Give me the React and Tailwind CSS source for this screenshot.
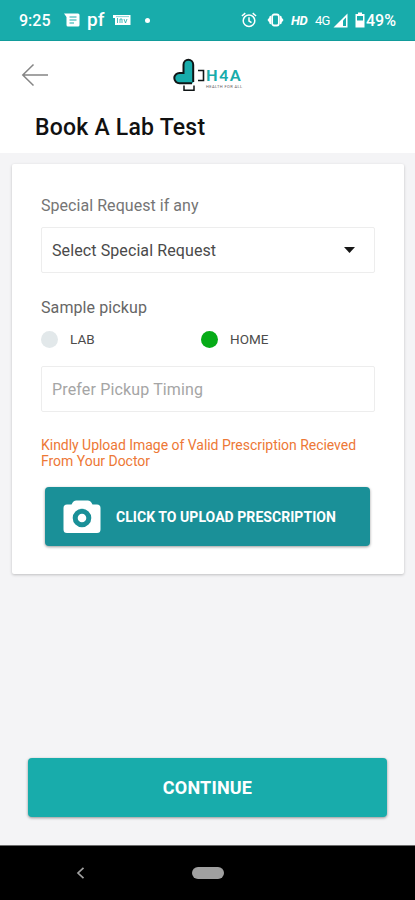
import { useState } from "react";

function StatusBar() {
  return (
    <div className="h-[41px] bg-[#18acab] border-b border-[#129c9b] flex items-center text-white pl-[19px] pr-[18px]">
      <span className="w-8 pt-[2px] text-[16px] font-medium leading-none whitespace-nowrap">9:25</span>

      <svg className="ml-[13px] w-[16px] h-[14px]" viewBox="0 0 16 14" fill="none">
        <path d="M0 0.500H14A1.500 1.500 0 0 1 15.500 2V12A1.500 1.500 0 0 1 14 13.500H4A1.500 1.500 0 0 1 2.500 12V4Z" fill="white" />
        <path d="M5.500 4H12.500M5.500 7H12.500M5.500 10H10" stroke="#18acab" strokeWidth="1.200" />
      </svg>
      <span className="ml-[7px] w-[17px] text-[19px] font-medium leading-none -mt-[2px] whitespace-nowrap">pf</span>
      <svg className="ml-[9px] w-[18px] h-[12px]" viewBox="0 0 18 12" fill="none">
        <path d="M0 1H17.500V11H2V4H0Z" fill="white" />
        <path d="M4.500 4V9M7 9V5H9V9M11 5L12.500 9L14 5" stroke="#18acab" strokeWidth="0.800" />
        <path d="M3 2.600H16" stroke="#18acab" strokeWidth="0.500" />
      </svg>
      <span className="ml-[14px] w-[5px] h-[5px] rounded-full bg-white" />

      <svg className="ml-auto w-[16px] h-[16px]" viewBox="0 0 16 16" fill="none" stroke="white" strokeWidth="1.500">
        <circle cx="8" cy="8.700" r="5.800" />
        <path d="M8 5.200V9L10.500 10.600M0.900 4L4.300 1.200M15.100 4L11.700 1.200" />
      </svg>
      <svg className="ml-[10px] w-[17px] h-[14px]" viewBox="0 0 18 14" preserveAspectRatio="none" fill="none">
        <rect x="5.500" y="1.500" width="7" height="11" rx="2" stroke="white" strokeWidth="1.800" />
        <path d="M4.500 2.500V11.500L2.500 10.500V9.500L0.500 7L2.500 4.500V3.500ZM13.500 2.500V11.500L15.500 10.500V9.500L17.500 7L15.500 4.500V3.500Z" fill="white" />
      </svg>
      <span className="ml-[7px] w-[17px] pt-px text-[13px] font-bold italic leading-none tracking-[-0.3px] whitespace-nowrap">HD</span>
      <span className="ml-[7px] w-[15px] pt-px text-[13px] leading-none tracking-[-0.8px] whitespace-nowrap">4G</span>
      <svg className="ml-[3px] w-[15px] h-[15px]" viewBox="0 0 15 15" fill="none">
        <path d="M14.500 0.500V14.500H0.500Z" fill="white" />
        <path d="M13 4.500V13H10V7.500Z" fill="#18acab" />
      </svg>
      <svg className="ml-[7px] w-[10px] h-[16px]" viewBox="0 0 10 16" fill="none">
        <path d="M3 0.500H7V2H9.500V15.500H0.500V2H3Z" fill="white" />
        <path d="M2 4H8V8.500H2Z" fill="#18acab" />
      </svg>
      <span className="ml-px w-[31px] pt-[2px] text-[16px] font-medium leading-none whitespace-nowrap">49%</span>
    </div>
  );
}

function Logo() {
  return (
    <div className="flex items-start">
      <svg className="w-[33px] h-[34px]" viewBox="0 0 33 34" fill="none">
        <path
          d="M20.200 25.300H6.500A5.200 5.200 0 0 1 6.500 14.900H10.500V6.700A4.850 4.850 0 0 1 20.200 6.700Z"
          fill="#18acab"
        />
        <path
          d="M19 25.300H6.500A5.200 5.200 0 0 1 6.500 14.900H10.500V6.700A4.850 4.850 0 0 1 20.200 6.700V24"
          stroke="#101516"
          strokeWidth="2"
        />
        <path d="M25 12.500H30.500V22.500H25" stroke="#101516" strokeWidth="1.600" />
        <path d="M11 27.500V32.200H21V27.500" stroke="#101516" strokeWidth="1.500" />
      </svg>
      <div className="mt-[8px] w-[38px]">
        <p className="font-[Lato,sans-serif] text-[15px] leading-[18px] font-black tracking-[1.8px] text-[#18acab] whitespace-nowrap">H4A</p>
        <p className="text-[4px] leading-[5px] tracking-[0.4px] text-[#665c5c] whitespace-nowrap">HEALTH FOR ALL</p>
      </div>
    </div>
  );
}

function PickupOption({ label, selected, onSelect }) {
  return (
    <button type="button" onClick={onSelect} className="w-[160px] h-[18px] flex items-center gap-[12px]">
      <span className={selected ? "w-[17px] h-[17px] rounded-full bg-[#06ab17]" : "w-[17px] h-[17px] rounded-full bg-[#e2e8ea]"} />
      <span className="text-[13.5px] leading-[18px] text-[#4c4c4c]">{label}</span>
    </button>
  );
}

function App() {
  const [pickup, setPickup] = useState("HOME");

  return (
    <div className="w-full h-[900px] flex flex-col overflow-hidden bg-[#f4f4f6] font-[Roboto,sans-serif]">
      <StatusBar />

      <header className="h-[112px] shrink-0 bg-white">
        <div className="h-[69px] flex items-start pl-[21px] pt-[17px]">
          <svg className="mt-[5px] w-[28px] h-[24px]" viewBox="0 0 28 24" fill="none" stroke="#858585" strokeWidth="1.500">
            <path d="M12.500 1.500L1.800 12L12.500 22.500M1.800 12H27" />
          </svg>
          <div className="ml-[124px]">
            <Logo />
          </div>
        </div>
        <h1 className="pl-[35px] pt-px text-[23px] leading-[34px] font-medium tracking-[0.22px] text-[#111]">Book A Lab Test</h1>
      </header>

      <main className="flex-1 flex flex-col">
        <section className="mt-[11px] ml-[12px] mr-[11px] h-[410px] bg-white rounded-[2px] shadow-[0_1px_3px_rgba(0,0,0,0.22)] px-[29px] pt-[31px]">
          <p className="text-[16px] leading-[22px] tracking-[0.05px] text-[#757575]">Special Request if any</p>

          <button type="button" className="mt-[10px] w-[334px] h-[46px] border-[1.5px] border-[#ededed] rounded-[2px] flex items-center justify-between pl-[10px] pr-[19px]">
            <span className="pt-[2px] text-[16px] tracking-[0.1px] text-[#4a4a4a]">Select Special Request</span>
            <svg className="w-[11px] h-[6px]" viewBox="0 0 11 6">
              <path d="M0 0H11L5.500 6Z" fill="#161616" />
            </svg>
          </button>

          <p className="mt-[24px] text-[16px] leading-[22px] tracking-[0.1px] text-[#666]">Sample pickup</p>
          <div className="mt-[11px] h-[18px] flex">
            <PickupOption label="LAB" selected={pickup === "LAB"} onSelect={() => setPickup("LAB")} />
            <PickupOption label="HOME" selected={pickup === "HOME"} onSelect={() => setPickup("HOME")} />
          </div>

          <input
            type="text"
            placeholder="Prefer Pickup Timing"
            className="mt-[18px] block w-[334px] h-[46px] border-[1.5px] border-[#ededed] rounded-[2px] pl-[10px] pt-px text-[16px] tracking-[0.15px] outline-none placeholder:text-[#a5a5a5]"
          />

          <p className="mt-[25px] text-[14px] leading-[16px] tracking-[-0.03px] text-[#ed7836]">
            Kindly Upload Image of Valid Prescription Recieved
            <br />
            From Your Doctor
          </p>

          <button type="button" className="mt-[18px] ml-[4px] w-[325px] h-[59px] rounded-[4px] bg-[#1a9098] shadow-[0_1px_3px_rgba(0,0,0,0.4)] flex items-center pl-[18px] text-white">
            <svg className="w-[38px] h-[34px]" viewBox="0 0 38 34">
              <path d="M13 0.500H25Q27 0.500 28 2L29.500 4.500H34Q37.500 4.500 37.500 8V29.500Q37.500 33 34 33H4Q0.500 33 0.500 29.500V8Q0.500 4.500 4 4.500H8.500L10 2Q11 0.500 13 0.500Z" fill="white" />
              <circle cx="19" cy="18" r="6.800" fill="white" stroke="#1a9098" strokeWidth="5" />
            </svg>
            <span className="ml-[15px] pt-px text-[14px] font-bold tracking-[0.05px] whitespace-nowrap">CLICK TO UPLOAD PRESCRIPTION</span>
          </button>
        </section>

        <button type="button" className="mt-auto mb-[28px] ml-[28px] w-[359px] h-[59px] shrink-0 rounded-[4px] bg-[#18acab] shadow-[0_1px_3px_rgba(0,0,0,0.4)] text-[18px] font-bold tracking-[0.2px] text-white">
          CONTINUE
        </button>
      </main>

      <nav className="h-[55px] shrink-0 bg-black border-t border-[#6b6b6b] flex items-center pl-[76px]">
        <svg className="w-[9px] h-[12px]" viewBox="0 0 9 12" fill="none" stroke="#a0a0a0" strokeWidth="1.700">
          <path d="M7.500 0.800L2 6L7.500 11.200" />
        </svg>
        <span className="ml-[107px] w-[32px] h-[12px] rounded-full bg-[#a0a0a0]" />
      </nav>
    </div>
  );
}

export default App;
